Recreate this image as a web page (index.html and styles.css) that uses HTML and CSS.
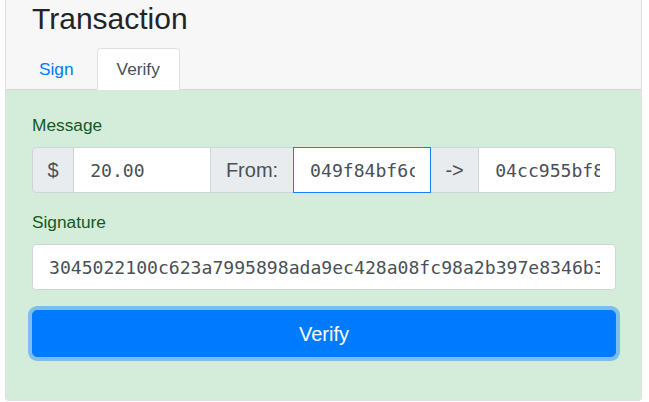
FILE: index.html
```html
<!DOCTYPE html>
<html lang="en">
<head>
<meta charset="utf-8">
<title>Transaction</title>
<link rel="stylesheet" href="styles.css">
</head>
<body>
<div class="page">
  <div class="card">
    <div class="card-header">
      <h2 class="title">Transaction</h2>
      <ul class="tabs">
        <li class="tab"><a class="tab-link" href="#">Sign</a></li>
        <li class="tab"><a class="tab-link active" href="#">Verify</a></li>
      </ul>
    </div>
    <div class="card-body">
      <div class="form-group">
        <label class="label">Message</label>
        <div class="input-group">
          <span class="addon addon-dollar">$</span>
          <input class="field" type="text" value="20.00">
          <span class="addon addon-from">From:</span>
          <input class="field field-focus" type="text" value="049f84bf6c3a1d2e8b70a5c4">
          <span class="addon addon-arrow">-&gt;</span>
          <input class="field field-last" type="text" value="04cc955bf8e2a7d41c9036b7">
        </div>
      </div>
      <div class="form-group form-group-sig">
        <label class="label">Signature</label>
        <input class="field field-single" type="text" value="3045022100c623a7995898ada9ec428a08fc98a2b397e8346b3f0d2a19c7">
      </div>
      <button class="btn" type="button">Verify</button>
    </div>
  </div>
</div>
</body>
</html>
```
FILE: styles.css
```css
* { box-sizing: border-box; }

html, body {
  margin: 0;
  padding: 0;
  background: #ffffff;
}

body {
  font-family: "Liberation Sans", Arial, sans-serif;
  font-size: 17.3px;
  line-height: 1.5;
  color: #212529;
}

.page {
  padding: 0 7px 0 5px;
}

.card {
  width: 637px;
  margin-top: -14px;
  border: 1px solid rgba(0, 0, 0, 0.125);
  border-radius: 4px;
  background: #ffffff;
  overflow: hidden;
}

.card-header {
  background: #f7f7f7;
  padding: 13px 25px 0 26px;
  border-bottom: 1px solid #d8d8d8;
}

.title {
  margin: 0 0 10px 0;
  font-size: 30px;
  line-height: 38px;
  font-weight: 400;
  color: #212529;
}

.tabs {
  display: flex;
  gap: 3px;
  list-style: none;
  margin: 0 0 -1px -13px;
  padding: 0;
}

.tab-link {
  display: block;
  padding: 8px 19px;
  line-height: 24px;
  font-size: 17.3px;
  border: 1px solid transparent;
  border-top-left-radius: 4px;
  border-top-right-radius: 4px;
  color: #007bff;
  text-decoration: none;
}

.tab-link.active {
  color: #495057;
  background: #ffffff;
  border-color: #dee2e6 #dee2e6 #ffffff;
}

.card-body {
  background: #d4edda;
  color: #155724;
  padding: 23px 25px 43px 26px;
}

.form-group {
  margin-bottom: 17px;
}

.form-group-sig {
  margin-bottom: 20px;
}

.label {
  display: block;
  font-size: 17.3px;
  line-height: 24px;
  margin-bottom: 10px;
}

.input-group {
  display: flex;
  align-items: stretch;
  height: 46px;
}

.addon {
  flex: none;
  display: flex;
  align-items: center;
  background: #e9ecef;
  border: 1px solid #ced4da;
  color: #495057;
  font-size: 20px;
  line-height: 1.5;
  margin-left: -1px;
}

.addon-dollar {
  margin-left: 0;
  padding: 0 14.5px;
  border-top-left-radius: 4px;
  border-bottom-left-radius: 4px;
}

.addon-from {
  padding: 0 15px;
}

.addon-arrow {
  padding: 0 14.5px;
}

.field {
  flex: 1 1 0;
  min-width: 0;
  width: 1%;
  height: 46px;
  margin: 0 0 0 -1px;
  padding: 0 15px 0 16px;
  border: 1px solid #ced4da;
  border-radius: 0;
  background: #ffffff;
  color: #495057;
  font-family: "DejaVu Sans Mono", "Liberation Mono", monospace;
  font-size: 18.1px;
  outline: none;
}

.field-focus {
  position: relative;
  z-index: 1;
  border-color: #1a7eff;
}

.field-last {
  border-top-right-radius: 4px;
  border-bottom-right-radius: 4px;
}

.field-single {
  display: block;
  width: 100%;
  margin: 0;
  border-radius: 4px;
}

.btn {
  display: block;
  width: 100%;
  height: 47px;
  padding: 0;
  border: 1px solid #007bff;
  border-radius: 5px;
  background: #007bff;
  color: #ffffff;
  font-family: "Liberation Sans", Arial, sans-serif;
  font-size: 20px;
  line-height: 1.5;
  box-shadow: 0 0 0 4px rgba(38, 143, 255, 0.5);
  cursor: pointer;
}
```
